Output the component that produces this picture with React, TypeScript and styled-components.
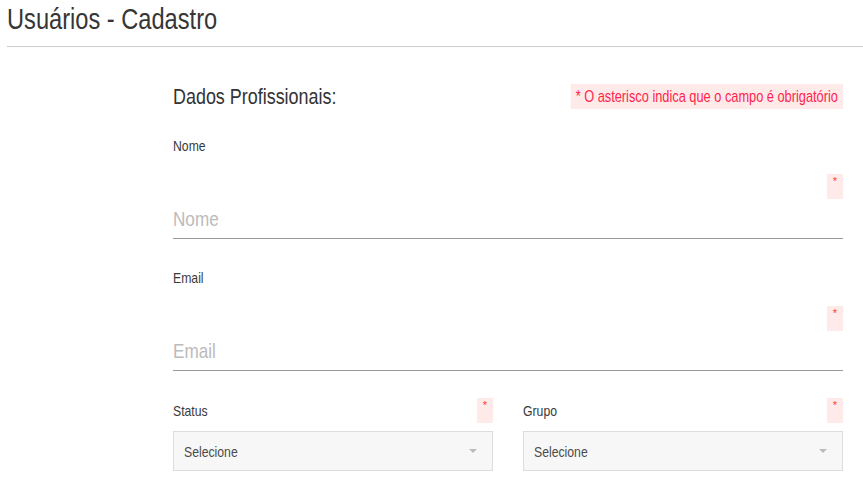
import React from 'react';
import styled, { createGlobalStyle } from 'styled-components';

// the screenshot uses a condensed grotesque; Liberation Sans squeezed horizontally stands in for it
const SQUEEZE = 0.815;

const GlobalStyle = createGlobalStyle`
  body {
    margin: 0;
    background: #fff;
    font-family: "Liberation Sans", Arial, sans-serif;
    color: #333;
  }
`;

const Narrow = styled.span<{ $origin?: string }>`
  display: inline-block;
  white-space: nowrap;
  transform: scaleX(${SQUEEZE});
  transform-origin: ${(p) => p.$origin || 'left'} center;
`;

const Header = styled.div`
  margin-left: 7px;
  height: 46px;
  border-bottom: 1px solid #ccc;
`;

const Title = styled.h1`
  margin: 0;
  font-size: 29px;
  font-weight: normal;
  line-height: 38px;
  color: #363636;
`;

const Form = styled.div`
  margin-left: 173px;
  width: 670px;
  padding-top: 37px;
`;

const SectionHead = styled.div`
  display: flex;
  justify-content: space-between;
  align-items: center;
  height: 25px;
`;

const SectionTitle = styled.h2`
  margin: 0;
  font-size: 22px;
  font-weight: normal;
  color: #333;
`;

const Notice = styled(Narrow)`
  background: #ffeaea;
  color: #ff1f4b;
  font-size: 15.7px;
  line-height: 25px;
  padding: 0 6px;
`;

const Fields = styled.div`
  display: flex;
  flex-direction: column;
  gap: 29px;
  margin-top: 27px;
`;

const Label = styled.div`
  font-size: 15px;
  line-height: 20px;
  color: #3a3a3a;
`;

const Required = styled.span`
  display: block;
  flex: none;
  width: 16px;
  height: 25px;
  background: #ffeaea;
  color: #ff3b30;
  font-size: 11px;
  line-height: 14px;
  text-align: center;
`;

const RequiredRow = styled.div`
  display: flex;
  justify-content: flex-end;
  margin-top: 18px;
`;

const InputWrap = styled.div`
  height: 40px;
  box-sizing: border-box;
  border-bottom: 1px solid #999;
  overflow: hidden;
`;

const LineInput = styled.input`
  display: block;
  width: calc(100% / ${SQUEEZE});
  height: 39px;
  box-sizing: border-box;
  border: none;
  padding: 0;
  background: transparent;
  font-family: inherit;
  font-size: 21px;
  color: #333;
  outline: none;
  transform: scaleX(${SQUEEZE});
  transform-origin: left center;
  &::placeholder {
    color: #bbb;
  }
`;

const Row = styled.div`
  display: grid;
  grid-template-columns: 1fr 1fr;
  column-gap: 30px;
  margin-top: 27px;
`;

const RowHead = styled.div`
  display: flex;
  justify-content: space-between;
  align-items: center;
  height: 25px;
`;

const Select = styled.div`
  margin-top: 8px;
  height: 40px;
  box-sizing: border-box;
  border: 1px solid #ddd;
  background: #f7f7f7;
  display: flex;
  align-items: center;
  justify-content: space-between;
  padding: 0 15px 0 10px;
  font-size: 15px;
  color: #4a4a4a;
`;

const Caret = styled.span`
  width: 0;
  height: 0;
  border-left: 4px solid transparent;
  border-right: 4px solid transparent;
  border-top: 4px solid #bbb;
`;

const LineField = ({ label }: { label: string }) => (
  <div>
    <Label>
      <Narrow>{label}</Narrow>
    </Label>
    <RequiredRow>
      <Required>*</Required>
    </RequiredRow>
    <InputWrap>
      <LineInput placeholder={label} />
    </InputWrap>
  </div>
);

const SelectField = ({ label }: { label: string }) => (
  <div>
    <RowHead>
      <Label>
        <Narrow>{label}</Narrow>
      </Label>
      <Required>*</Required>
    </RowHead>
    <Select>
      <Narrow>Selecione</Narrow>
      <Caret />
    </Select>
  </div>
);

export default function App() {
  return (
    <>
      <GlobalStyle />
      <Header>
        <Title>
          <Narrow>Usuários - Cadastro</Narrow>
        </Title>
      </Header>
      <Form>
        <SectionHead>
          <SectionTitle>
            <Narrow>Dados Profissionais:</Narrow>
          </SectionTitle>
          <Notice $origin="right">* O asterisco indica que o campo é obrigatório</Notice>
        </SectionHead>
        <Fields>
          <LineField label="Nome" />
          <LineField label="Email" />
        </Fields>
        <Row>
          <SelectField label="Status" />
          <SelectField label="Grupo" />
        </Row>
      </Form>
    </>
  );
}
